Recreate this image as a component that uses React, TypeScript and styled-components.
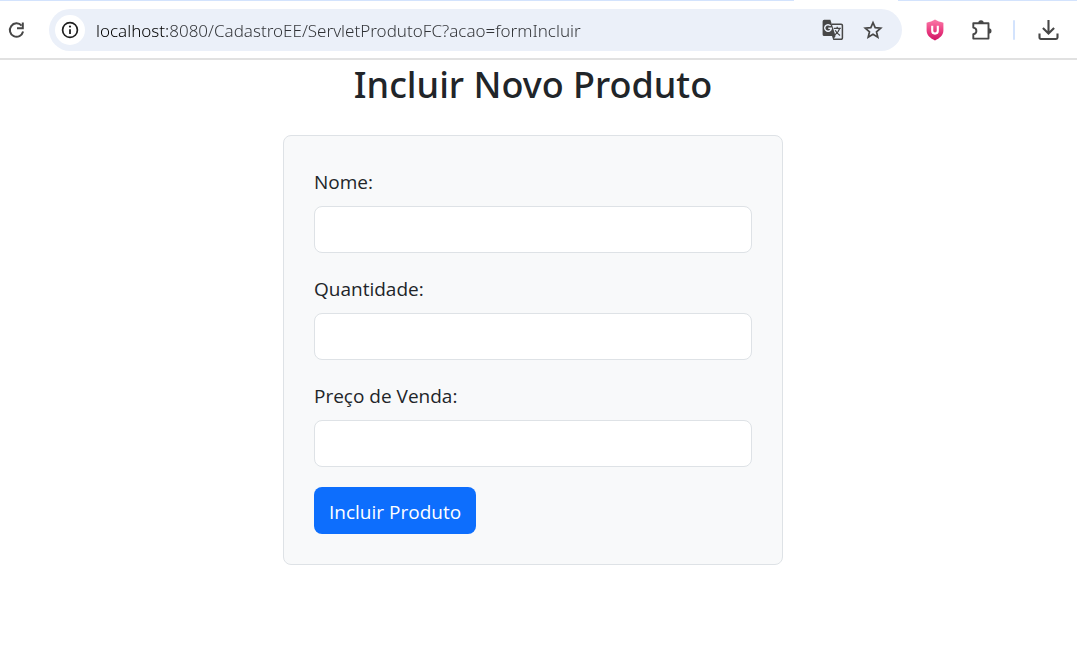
import React from "react";
import styled, { createGlobalStyle } from "styled-components";

const GlobalStyle = createGlobalStyle`
  *, *::before, *::after { box-sizing: border-box; }
  body {
    margin: 0;
    background: #fff;
    color: #212529;
    font-family: "Open Sans", "Noto Sans", sans-serif;
  }
`;

const TabEdge = styled.div`
  display: flex;
  height: 1px;
`;

const TabEdgeLine = styled.span<{ $grow?: boolean }>`
  flex: ${(p) => (p.$grow ? "1" : "0 0 179px")};
  background: #d3e3fd;
`;

const TabEdgeGap = styled.span`
  flex: 0 0 104px;
`;

const Toolbar = styled.header`
  display: flex;
  align-items: center;
  padding: 8px 17px 7px 6px;
  border-bottom: 2px solid #e1e1e1;
`;

const IconButton = styled.button`
  display: flex;
  align-items: center;
  justify-content: center;
  flex: none;
  padding: 0;
  border: 0;
  background: none;
  color: #474747;
  cursor: pointer;

  svg { display: block; }
`;

const SiteInfoButton = styled(IconButton)`
  width: 30px;
  height: 30px;
  border-radius: 50%;
  background: #fff;
  color: #1f1f1f;
`;

const AddressBar = styled.div`
  display: flex;
  align-items: center;
  flex: 1;
  min-width: 0;
  height: 42px;
  margin-left: 22px;
  padding: 0 19px 0 6px;
  border-radius: 21px;
  background: #ebf0f9;
`;

const AddressInput = styled.input`
  flex: 1;
  min-width: 0;
  height: 32px;
  margin-left: 11px;
  padding: 0;
  border: 0;
  outline: 0;
  font: 300 17px/30px "Noto Sans", "Open Sans", sans-serif;
  color: transparent;
  background: linear-gradient(to right, #000 73px, #303236 73px);
  background-clip: text;
  -webkit-background-clip: text;
`;

const AddressActions = styled.div`
  display: flex;
  align-items: center;
  gap: 19px;
`;

const Extensions = styled.div`
  display: flex;
  align-items: center;
  gap: 20px;
  margin-left: 24px;
`;

const ShieldButton = styled(IconButton)`
  margin-right: 7px;
`;

const Divider = styled.span`
  width: 2px;
  height: 20px;
  margin-right: 3px;
  border-radius: 1px;
  background: #d3e3fd;
`;

const Page = styled.main`
  padding-right: 11px;
`;

const Title = styled.h1`
  margin: 0 0 25px;
  font-family: "Noto Sans", "Open Sans", sans-serif;
  font-size: 36px;
  line-height: 50px;
  font-weight: 500;
  text-align: center;
`;

const Card = styled.form`
  max-width: 500px;
  margin: 0 auto;
  padding: 30px;
  border: 1px solid #dee2e6;
  border-radius: 8px;
  background: #f8f9fa;
`;

const Field = styled.div`
  margin-bottom: 20px;
`;

const Label = styled.label`
  display: block;
  margin-bottom: 8px;
  font-size: 19px;
  line-height: 32px;
`;

const TextInput = styled.input`
  display: block;
  width: 100%;
  height: 47px;
  padding: 7px 15px;
  border: 1px solid #dee2e6;
  border-radius: 8px;
  background: #fff;
  color: #212529;
  font: inherit;
  font-size: 19px;
`;

const SubmitButton = styled.button`
  display: block;
  height: 47px;
  padding: 2px 15px 0;
  border: 0;
  border-radius: 8px;
  background: #0d6efd;
  color: #fff;
  font: inherit;
  font-size: 19px;
  line-height: 30px;
  cursor: pointer;
`;

const ReloadIcon = () => (
  <svg width="21" height="22" viewBox="0 0 21 22" fill="none" stroke="currentColor" strokeWidth="2">
    <path d="M15.6 6.6A6.7 6.7 0 1 0 17.1 12.6" />
    <path d="M16.8 3.4V9.2H11" />
  </svg>
);

const InfoIcon = () => (
  <svg width="18" height="18" viewBox="0 0 18 18" fill="none">
    <circle cx="9" cy="9" r="7.4" stroke="currentColor" strokeWidth="1.7" />
    <path d="M9 8.2V13" stroke="currentColor" strokeWidth="1.8" />
    <circle cx="9" cy="5.6" r="1.1" fill="currentColor" />
  </svg>
);

const TranslateIcon = () => (
  <svg width="22" height="22" viewBox="0 0 22 22" fill="none">
    <path d="M10 5.2H19.2A1.2 1.2 0 0 1 20.4 6.4V19A1.2 1.2 0 0 1 19.2 20.2H11.2" stroke="#474747" strokeWidth="1.5" />
    <path d="M2.2 0.8H8.4L13.6 17H2.2A1.6 1.6 0 0 1 0.6 15.4V2.4A1.6 1.6 0 0 1 2.2 0.8Z" fill="#474747" />
    <path d="M10 17H13.6L11.2 20.8Z" fill="#474747" />
    <path d="M8.6 6.9A3.3 3.3 0 1 0 9.3 9.3H6.3" stroke="#ebf0f9" strokeWidth="1.5" />
    <path d="M11.8 9.4H18.8M15.2 7.8V9.4M17.6 9.6C16.8 12.2 15 14.4 13 15.8M13.2 11.2C14.4 13.4 16 15 18 16.6" stroke="#474747" strokeWidth="1.3" />
  </svg>
);

const StarIcon = () => (
  <svg width="20" height="20" viewBox="0 0 20 20" fill="none" stroke="currentColor" strokeWidth="1.7">
    <path d="M10 2.6L12.2 7.7L17.7 8.2L13.5 11.8L14.8 17.2L10 14.3L5.2 17.2L6.5 11.8L2.3 8.2L7.8 7.7Z" />
  </svg>
);

const ShieldIcon = () => (
  <svg width="18" height="22" viewBox="0 0 18 22" fill="none">
    <defs>
      <linearGradient id="shield" x1="0" y1="0" x2="0" y2="1">
        <stop offset="0" stopColor="#fb7aa8" />
        <stop offset="0.5" stopColor="#ec4183" />
        <stop offset="1" stopColor="#cf1264" />
      </linearGradient>
    </defs>
    <path d="M9 0.6C11.4 2.1 14.2 3.2 17.4 3.7V11.5C17.4 16.2 13.6 19.3 9 21.4C4.4 19.3 0.6 16.2 0.6 11.5V3.7C3.8 3.2 6.6 2.1 9 0.6Z" fill="url(#shield)" />
    <path d="M6.2 6.8V11.8A2.8 2.8 0 0 0 11.8 11.8V6.8" stroke="#fff" strokeWidth="2.1" />
  </svg>
);

const PuzzleIcon = () => (
  <svg width="22" height="22" viewBox="0 0 22 22">
    <path
      d="M2.3 4.2H17.5V19.6H2.3V15.2C4.2 14.9 5.4 13.7 5.4 11.9C5.4 10.1 4.2 8.9 2.3 8.6Z"
      fill="none"
      stroke="currentColor"
      strokeWidth="1.9"
      strokeLinejoin="round"
    />
    <path d="M7.3 4A2.7 2.7 0 0 1 12.7 4ZM17.8 9.2A2.7 2.7 0 0 1 17.8 14.6Z" fill="currentColor" />
  </svg>
);

const DownloadIcon = () => (
  <svg width="22" height="22" viewBox="0 0 22 22" fill="none" stroke="currentColor" strokeWidth="2.1">
    <path d="M10.5 1V14.2M4.9 9L10.5 14.6L16.1 9M1.5 14.6V18.6A1.4 1.4 0 0 0 2.9 20H18.1A1.4 1.4 0 0 0 19.5 18.6V14.6" />
  </svg>
);

const fields = [
  { id: "nome", label: "Nome:" },
  { id: "quantidade", label: "Quantidade:" },
  { id: "precoVenda", label: "Preço de Venda:" },
];

export default function App() {
  return (
    <>
      <GlobalStyle />
      <TabEdge>
        <TabEdgeLine $grow />
        <TabEdgeGap />
        <TabEdgeLine />
      </TabEdge>
      <Toolbar>
        <IconButton type="button" aria-label="Recarregar">
          <ReloadIcon />
        </IconButton>
        <AddressBar>
          <SiteInfoButton type="button" aria-label="Informações do site">
            <InfoIcon />
          </SiteInfoButton>
          <AddressInput
            type="text"
            aria-label="Endereço"
            spellCheck={false}
            defaultValue="localhost:8080/CadastroEE/ServletProdutoFC?acao=formIncluir"
          />
          <AddressActions>
            <IconButton type="button" aria-label="Traduzir">
              <TranslateIcon />
            </IconButton>
            <IconButton type="button" aria-label="Favoritar">
              <StarIcon />
            </IconButton>
          </AddressActions>
        </AddressBar>
        <Extensions>
          <ShieldButton type="button" aria-label="Escudo">
            <ShieldIcon />
          </ShieldButton>
          <IconButton type="button" aria-label="Extensões">
            <PuzzleIcon />
          </IconButton>
          <Divider />
          <IconButton type="button" aria-label="Downloads">
            <DownloadIcon />
          </IconButton>
        </Extensions>
      </Toolbar>
      <Page>
        <Title>Incluir Novo Produto</Title>
        <Card onSubmit={(e: React.FormEvent) => e.preventDefault()}>
          {fields.map((f) => (
            <Field key={f.id}>
              <Label htmlFor={f.id}>{f.label}</Label>
              <TextInput id={f.id} name={f.id} type="text" />
            </Field>
          ))}
          <SubmitButton type="submit">Incluir Produto</SubmitButton>
        </Card>
      </Page>
    </>
  );
}
